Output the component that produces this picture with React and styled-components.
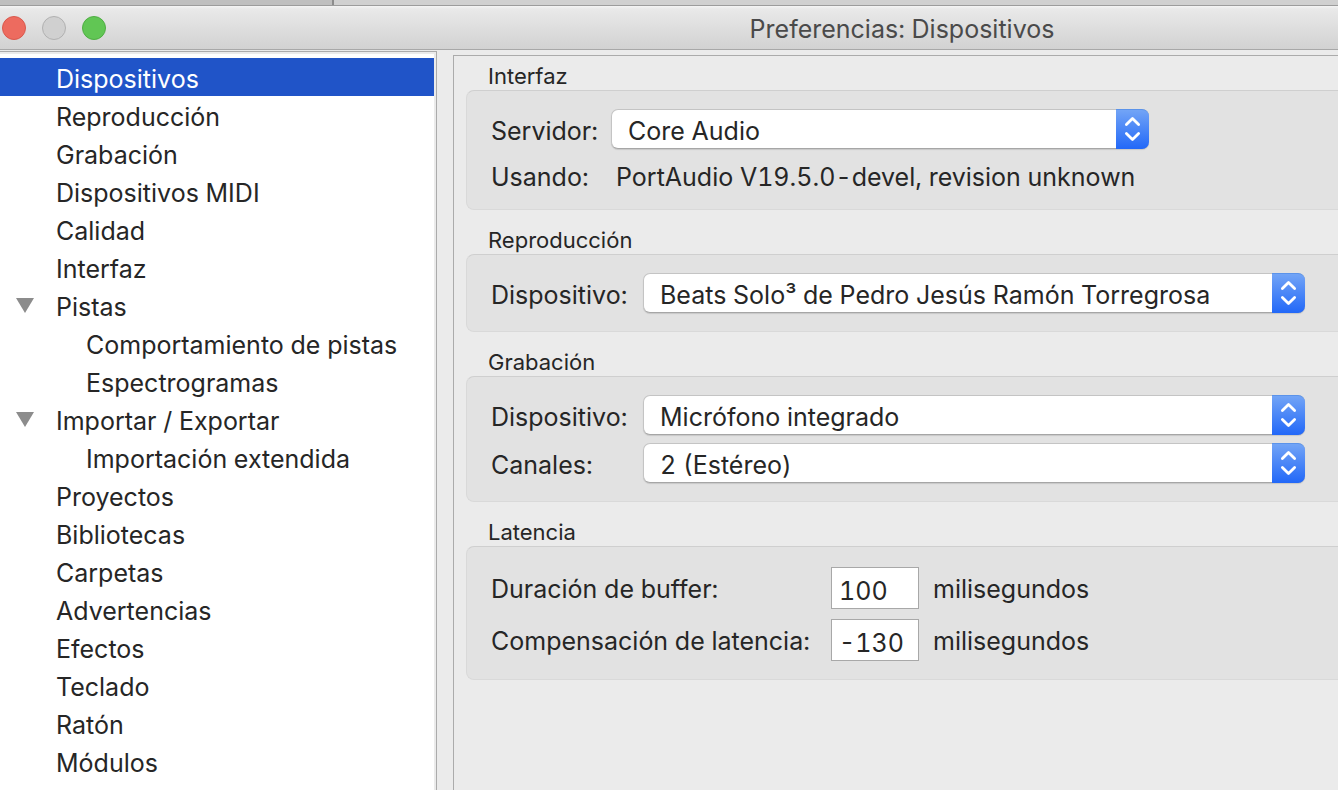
import React from "react";
import styled, { createGlobalStyle } from "styled-components";

const GlobalStyle = createGlobalStyle`
  *, *::before, *::after { box-sizing: border-box; }
  body {
    margin: 0;
    background: #ebebeb;
    color: #262626;
    font-family: Inter, "Liberation Sans", sans-serif;
    font-size: 25px;
    font-variant-numeric: tabular-nums;
    line-height: 32px;
  }
`;

const Page = styled.div`
  display: flex;
  flex-direction: column;
  min-height: 100vh;
  overflow-x: hidden;
`;

const Backdrop = styled.div`
  display: flex;
  height: 5px;
  background: #d0d0d0;
`;

const BackdropPane = styled.div`
  width: 334px;
  background: #bfbfbf;
  border-right: 2px solid #8c8c8c;
`;

const TitleBar = styled.header`
  display: flex;
  align-items: center;
  height: 45px;
  padding-left: 2px;
  border-top: 1px solid #9c9c9c;
  border-bottom: 1px solid #a8a8a8;
  background: linear-gradient(#f4f4f4, #e9e9e9 3px, #d2d2d2);
`;

const Lights = styled.div`
  display: flex;
  gap: 16px;
`;

const Light = styled.button`
  width: 24px;
  height: 24px;
  padding: 0;
  border: 1px solid ${(p) => p.$edge};
  border-radius: 50%;
  background: ${(p) => p.$fill};
`;

const Title = styled.h1`
  flex: 1;
  margin: 0;
  padding: 2px 0 0 360px;
  color: #4a4a4a;
  font-size: 25px;
  font-weight: 400;
  text-align: center;
  white-space: nowrap;
`;

const Body = styled.div`
  display: flex;
  flex: 1;
  align-items: stretch;
`;

const Sidebar = styled.nav`
  flex: none;
  width: 437px;
  margin-top: 1px;
  padding: 2px 2px 0 0;
  border-top: 1px solid #ababab;
  border-right: 1px solid #ababab;
`;

const Tree = styled.ul`
  height: 100%;
  margin: 0;
  padding: 4px 0 0;
  background: #fff;
  list-style: none;
`;

const TreeRow = styled.li`
  display: flex;
  height: 38px;
  background: ${(p) => (p.$selected ? "#2054c8" : "transparent")};
  color: ${(p) => (p.$selected ? "#fff" : "inherit")};
`;

const Gutter = styled.div`
  display: flex;
  flex: none;
  align-items: center;
  width: ${(p) => (p.$nested ? 86 : 56)}px;
  padding-left: 16px;
`;

const Toggle = styled.button`
  display: flex;
  padding: 0;
  border: 0;
  background: none;
  svg { display: block; }
`;

const TreeLink = styled.a`
  flex: 1;
  padding-top: 2px;
  color: inherit;
  line-height: 38px;
  text-decoration: none;
  white-space: nowrap;
`;

const Panel = styled.main`
  flex: 1;
  min-width: 0;
  margin: 5px 0 0 16px;
  padding: 6px 0 0 12px;
  border-top: 1px solid #ababab;
  border-left: 1px solid #ababab;
`;

const Group = styled.section`
  margin-bottom: 16px;
`;

const GroupTitle = styled.h2`
  margin: 0;
  padding-left: 22px;
  font-size: 22px;
  font-weight: 400;
  line-height: 28px;
`;

const GroupBox = styled.div`
  display: flex;
  flex-direction: column;
  gap: ${(p) => p.$gap || 8}px;
  padding: ${(p) => p.$top || 18}px 0 ${(p) => p.$bottom || 18}px 24px;
  border: 1px solid #d9d9d9;
  border-top-color: #cfcfcf;
  border-right: 0;
  border-radius: 8px 0 0 8px;
  background: #e2e2e2;
`;

const Row = styled.div`
  display: flex;
  align-items: center;
  white-space: nowrap;
`;

const Label = styled.label`
  flex: none;
  width: ${(p) => p.$width}px;
  padding-top: 4px;
`;

const NumberLabel = styled(Label)`
  padding-top: 2px;
`;

const Caption = styled.span`
  flex: none;
  width: ${(p) => p.$width}px;
`;

const SelectWrap = styled.div`
  position: relative;
  flex: 0 1 ${(p) => p.$width}px;
  min-width: 0;
  height: 40px;
`;

const Select = styled.select`
  appearance: none;
  display: block;
  width: 100%;
  height: 40px;
  padding: 3px 40px 0 16px;
  border: 1px solid #c4c4c4;
  border-bottom-color: #a6a6a6;
  border-radius: 7px;
  background: #fff;
  box-shadow: 0 1px 1px rgba(0, 0, 0, 0.12);
  color: inherit;
  font: inherit;
`;

const Stepper = styled.span`
  position: absolute;
  top: 0;
  right: 0;
  display: flex;
  align-items: center;
  justify-content: center;
  width: 33px;
  height: 40px;
  border-top: 1px solid #5b93ea;
  border-radius: 0 7px 7px 0;
  background: linear-gradient(#72a4f6, #2268f8);
  pointer-events: none;
`;

const NumberBox = styled.input`
  width: 88px;
  height: 42px;
  margin-right: 14px;
  padding: 6px 0 0 7px;
  border: 1px solid #a8a8a8;
  border-radius: 0;
  background: #fff;
  color: inherit;
  font: inherit;
  font-variant-numeric: tabular-nums;
`;

function PopUp({ id, width, value }) {
  return (
    <SelectWrap $width={width}>
      <Select id={id} defaultValue={value}>
        <option>{value}</option>
      </Select>
      <Stepper aria-hidden="true">
        <svg width="17" height="27" viewBox="0 0 17 27" fill="none" stroke="#fff" strokeWidth="2.8" strokeLinecap="round" strokeLinejoin="round">
          <path d="M2.4 8.6 L8.5 2.6 L14.6 8.6" />
          <path d="M2.4 17.4 L8.5 23.4 L14.6 17.4" />
        </svg>
      </Stepper>
    </SelectWrap>
  );
}

function SelectRow({ id, label, labelWidth, width, value }) {
  return (
    <Row>
      <Label htmlFor={id} $width={labelWidth}>{label}</Label>
      <PopUp id={id} width={width} value={value} />
    </Row>
  );
}

function NumberRow({ id, label, value }) {
  return (
    <Row>
      <NumberLabel htmlFor={id} $width={340}>{label}</NumberLabel>
      <NumberBox id={id} type="text" defaultValue={value} />
      <NumberLabel as="span">milisegundos</NumberLabel>
    </Row>
  );
}

const items = [
  { name: "Dispositivos", selected: true },
  { name: "Reproducción" },
  { name: "Grabación" },
  { name: "Dispositivos MIDI" },
  { name: "Calidad" },
  { name: "Interfaz" },
  { name: "Pistas", open: true },
  { name: "Comportamiento de pistas", nested: true },
  { name: "Espectrogramas", nested: true },
  { name: "Importar / Exportar", open: true },
  { name: "Importación extendida", nested: true },
  { name: "Proyectos" },
  { name: "Bibliotecas" },
  { name: "Carpetas" },
  { name: "Advertencias" },
  { name: "Efectos" },
  { name: "Teclado" },
  { name: "Ratón" },
  { name: "Módulos" },
];

export default function App() {
  return (
    <Page>
      <GlobalStyle />
      <Backdrop><BackdropPane /></Backdrop>
      <TitleBar>
        <Lights>
          <Light aria-label="Cerrar" $fill="#ed6b5f" $edge="#d9594d" />
          <Light aria-label="Minimizar" $fill="#d0d0d0" $edge="#b1b1b1" />
          <Light aria-label="Ampliar" $fill="#61c654" $edge="#4fae43" />
        </Lights>
        <Title>Preferencias: Dispositivos</Title>
      </TitleBar>
      <Body>
        <Sidebar>
          <Tree>
            {items.map((item) => (
              <TreeRow key={item.name} $selected={item.selected}>
                <Gutter $nested={item.nested}>
                  {item.open && (
                    <Toggle aria-label={item.name} aria-expanded="true">
                      <svg width="18" height="15" viewBox="0 0 18 15" fill="#8c8c8c">
                        <path d="M0 0 H18 L9 15 Z" />
                      </svg>
                    </Toggle>
                  )}
                </Gutter>
                <TreeLink href="#">{item.name}</TreeLink>
              </TreeRow>
            ))}
          </Tree>
        </Sidebar>
        <Panel>
          <Group>
            <GroupTitle>Interfaz</GroupTitle>
            <GroupBox $gap={12} $bottom={16}>
              <SelectRow id="host" label="Servidor:" labelWidth={120} width={538} value="Core Audio" />
              <Row>
                <Caption $width={125}>Usando:</Caption>
                <span>PortAudio V19.5.0-devel, revision unknown</span>
              </Row>
            </GroupBox>
          </Group>
          <Group>
            <GroupTitle>Reproducción</GroupTitle>
            <GroupBox>
              <SelectRow id="play" label="Dispositivo:" labelWidth={152} width={662} value="Beats Solo³ de Pedro Jesús Ramón Torregrosa" />
            </GroupBox>
          </Group>
          <Group>
            <GroupTitle>Grabación</GroupTitle>
            <GroupBox>
              <SelectRow id="record" label="Dispositivo:" labelWidth={152} width={662} value="Micrófono integrado" />
              <SelectRow id="channels" label="Canales:" labelWidth={152} width={662} value="2 (Estéreo)" />
            </GroupBox>
          </Group>
          <Group>
            <GroupTitle>Latencia</GroupTitle>
            <GroupBox $gap={10} $top={20}>
              <NumberRow id="buffer" label="Duración de buffer:" value="100" />
              <NumberRow id="latency" label="Compensación de latencia:" value="-130" />
            </GroupBox>
          </Group>
        </Panel>
      </Body>
    </Page>
  );
}
